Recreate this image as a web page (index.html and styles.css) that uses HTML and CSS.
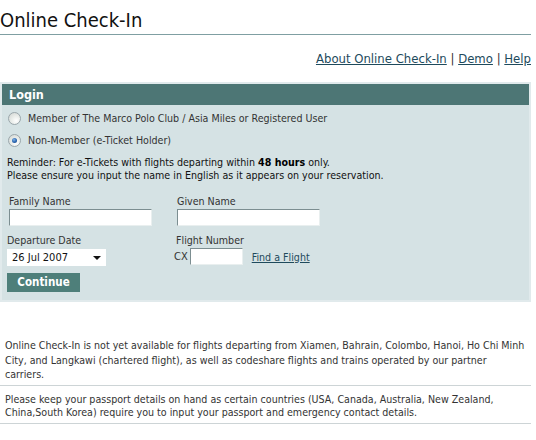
FILE: index.html
```html
<!DOCTYPE html>
<html>
<head>
<meta charset="utf-8">
<link rel="stylesheet" href="styles.css">
</head>
<body>
<div class="page">
  <h1 class="title">Online Check-In</h1>
  <div class="toplinks">
    <a href="#">About Online Check-In</a> <span class="sep">|</span> <a href="#">Demo</a> <span class="sep">|</span> <a href="#">Help</a>
  </div>

  <div class="panel">
    <div class="panel-head">Login</div>
    <div class="panel-body">
      <label class="radio-row"><input type="radio" name="who" class="radio"><span>Member of The Marco Polo Club / Asia Miles or Registered User</span></label>
      <label class="radio-row"><input type="radio" name="who" class="radio" checked><span>Non-Member (e-Ticket Holder)</span></label>
      <p class="reminder">Reminder: For e-Tickets with flights departing within <b>48 hours</b> only.<br>Please ensure you input the name in English as it appears on your reservation.</p>

      <div class="fields">
        <div class="field f-family">
          <div class="lbl">Family Name</div>
          <input type="text" class="txt name-input">
        </div>
        <div class="field f-given">
          <div class="lbl">Given Name</div>
          <input type="text" class="txt name-input">
        </div>
        <div class="field f-date">
          <div class="lbl">Departure Date</div>
          <div class="select"><span class="select-val">26 Jul 2007</span><span class="select-arrow"></span></div>
        </div>
        <div class="field f-flight">
          <div class="lbl">Flight Number</div>
          <div class="flight-row"><span class="cx">CX</span><input type="text" class="txt flight-input"><a href="#" class="find">Find a Flight</a></div>
        </div>
      </div>
      <button class="btn">Continue</button>
    </div>
  </div>

  <div class="notes">
    <p class="note">Online Check-In is not yet available for flights departing from Xiamen, Bahrain, Colombo, Hanoi, Ho Chi Minh City, and Langkawi (chartered flight), as well as codeshare flights and trains operated by our partner carriers.</p>
    <p class="note">Please keep your passport details on hand as certain countries (USA, Canada, Australia, New Zealand, China,South Korea) require you to input your passport and emergency contact details.</p>
  </div>
</div>
</body>
</html>
```

FILE: styles.css
```css
* { box-sizing: border-box; }
html, body { margin: 0; padding: 0; background: #fff; }
body {
  font-family: "DejaVu Sans Condensed", "DejaVu Sans", sans-serif;
  font-stretch: condensed;
  font-size: 10.6px;
  color: #333;
}
.page { width: 531px; }

.title {
  margin: 0;
  padding: 8px 0 2px 0;
  font-size: 20px;
  line-height: 24px;
  font-weight: normal;
  color: #111;
  border-bottom: 1px solid #7f9fa2;
}

.toplinks {
  margin-top: 17px;
  text-align: right;
  font-size: 13px;
  line-height: 14px;
  color: #333;
}
.toplinks a { color: #1e4a5c; text-decoration: underline; }

.panel {
  margin-top: 16px;
  border: 2px solid #e1eaec;
  background: #d5e2e4;
}
.panel-head {
  background: #4d7675;
  color: #fff;
  font-weight: bold;
  font-size: 12.5px;
  height: 21px;
  line-height: 21px;
  padding-left: 7px;
}
.panel-body { padding: 2px 0 8px 0; }

.radio-row {
  display: flex;
  align-items: center;
  height: 22px;
  padding-left: 6px;
  color: #333;
}
.radio {
  -webkit-appearance: none;
  appearance: none;
  margin: 0 7px 0 0;
  width: 13px;
  height: 13px;
  border-radius: 50%;
  border: 1px solid #9aa6ab;
  background: radial-gradient(circle at 65% 70%, #ffffff 0%, #e9ece9 45%, #cfd3d0 100%);
  position: relative;
}
.radio:checked::after {
  content: "";
  position: absolute;
  left: 3px; top: 3px;
  width: 5px; height: 5px;
  border-radius: 50%;
  background: radial-gradient(circle at 40% 35%, #7fb2e6 0%, #2a65b0 55%, #163f78 100%);
}

.reminder {
  margin: 5px 0 0 5px;
  line-height: 13px;
  color: #111;
}
.reminder b { color: #000; }

.fields {
  display: grid;
  grid-template-columns: 168px 1fr;
  row-gap: 8px;
  margin-top: 13px;
}
.lbl { line-height: 13px; color: #333; }
.f-family { padding-left: 7px; }
.f-given { padding-left: 7px; }
.f-date { padding-left: 5px; }
.f-flight { padding-left: 6px; }

.txt {
  display: block;
  margin: 1px 0 0 0;
  height: 17px;
  background: #fff;
  border: 1px solid;
  border-color: #7c8e91 #e9efef #e9efef #7c8e91;
  padding: 0 2px;
  font: inherit;
}
.name-input { width: 143px; }

.select {
  display: flex;
  align-items: center;
  justify-content: space-between;
  width: 99px;
  height: 17px;
  margin-top: 2px;
  background: #fff;
  padding: 0 5px 0 5px;
  font-size: 11px;
  color: #111;
}
.select-arrow {
  width: 0; height: 0;
  border-left: 4px solid transparent;
  border-right: 4px solid transparent;
  border-top: 4px solid #111;
}

.flight-row {
  display: flex;
  align-items: center;
  margin-top: 1px;
}
.cx { font-size: 11px; margin-left: -2px; color: #333; }
.flight-input { width: 53px; margin: 0 0 0 2px; }
.find { margin-left: 9px; color: #1e4a5c; font-size: 10.6px; }

.btn {
  display: block;
  margin: 7px 0 0 5px;
  width: 73px;
  height: 19px;
  border: 0;
  background: #4e7f7a;
  color: #fff;
  font-family: inherit;
  font-size: 11.5px;
  font-weight: bold;
  padding: 0;
  line-height: 19px;
}

.notes { margin-top: 36px; }
.note {
  margin: 0;
  padding: 0 5px 3px 5px;
  line-height: 14.5px;
  color: #333;
  border-bottom: 1px solid #cdd4d6;
}
.note + .note { padding-top: 7px; line-height: 13.5px; }
```
